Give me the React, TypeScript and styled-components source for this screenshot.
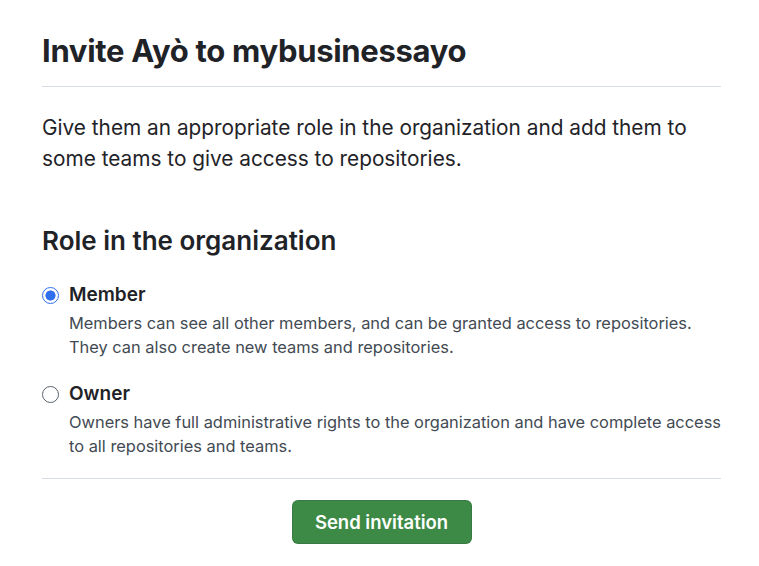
import styled, { createGlobalStyle } from "styled-components";
import { useState } from "react";

const GlobalStyle = createGlobalStyle`
  html, body {
    margin: 0;
    padding: 0;
    background: #ffffff;
  }
  body {
    font-family: Inter, "Noto Sans", sans-serif;
    color: #1f2328;
  }
`;

interface Role {
  id: string;
  label: string;
  description: string;
}

const roles: Role[] = [
  {
    id: "member",
    label: "Member",
    description:
      "Members can see all other members, and can be granted access to repositories. They can also create new teams and repositories.",
  },
  {
    id: "owner",
    label: "Owner",
    description:
      "Owners have full administrative rights to the organization and have complete access to all repositories and teams.",
  },
];

const App = () => {
  const [role, setRole] = useState("member");

  return (
    <>
      <GlobalStyle />
      <Page>
        <Title>Invite Ayò to mybusinessayo</Title>
        <Lead>
          Give them an appropriate role in the organization and add them to some teams to give
          access to repositories.
        </Lead>
        <SectionTitle>Role in the organization</SectionTitle>
        <RoleList>
          {roles.map((r) => (
            <RoleOption key={r.id}>
              <Radio
                type="radio"
                name="role"
                checked={role === r.id}
                onChange={() => setRole(r.id)}
              />
              <RoleText>
                <RoleLabel>{r.label}</RoleLabel>
                <RoleDesc>{r.description}</RoleDesc>
              </RoleText>
            </RoleOption>
          ))}
        </RoleList>
        <Footer>
          <SubmitButton type="button">Send invitation</SubmitButton>
        </Footer>
      </Page>
    </>
  );
};

const Page = styled.div`
  width: 679px;
  margin: 0 0 0 42px;
  padding-top: 30px;
`;

const Title = styled.h1`
  margin: 0;
  padding-bottom: 14px;
  border-bottom: 1px solid #d8dee4;
  font-size: 31px;
  font-weight: 700;
  line-height: 42px;
  letter-spacing: -0.3px;
`;

const Lead = styled.p`
  margin: 25px 0 0;
  font-size: 20.8px;
  line-height: 31px;
  color: #1f2328;
`;

const SectionTitle = styled.h2`
  margin: 49px 0 0;
  font-size: 26px;
  font-weight: 600;
  line-height: 36px;
`;

const RoleList = styled.div`
  display: flex;
  flex-direction: column;
  gap: 23px;
  margin-top: 24px;
  padding-bottom: 20px;
  border-bottom: 1px solid #d8dee4;
`;

const RoleOption = styled.label`
  display: flex;
  align-items: flex-start;
  gap: 10px;
  cursor: pointer;
`;

const Radio = styled.input`
  appearance: none;
  box-sizing: border-box;
  width: 17px;
  height: 17px;
  margin: 4px 0 0;
  border: 1px solid #57606a;
  border-radius: 50%;
  background: #fff;
  flex-shrink: 0;

  &:checked {
    border: 1.5px solid #2f6fee;
    background: radial-gradient(circle, #2f6fee 0 4.8px, #fff 5.3px);
  }
`;

const RoleText = styled.div`
  display: flex;
  flex-direction: column;
  gap: 4px;
  min-width: 0;
`;

const RoleLabel = styled.span`
  font-size: 19px;
  font-weight: 600;
  line-height: 24px;
`;

const RoleDesc = styled.span`
  font-size: 16.4px;
  line-height: 24px;
  color: #424a53;
`;

const Footer = styled.div`
  display: flex;
  justify-content: center;
  padding-top: 21px;
`;

const SubmitButton = styled.button`
  width: 180px;
  height: 44px;
  border: 1px solid rgba(31, 35, 40, 0.15);
  border-radius: 6px;
  background: #3d8a46;
  color: #fff;
  font-family: Inter, "Noto Sans", sans-serif;
  font-size: 18.5px;
  font-weight: 600;
  cursor: pointer;
`;

export default App;
